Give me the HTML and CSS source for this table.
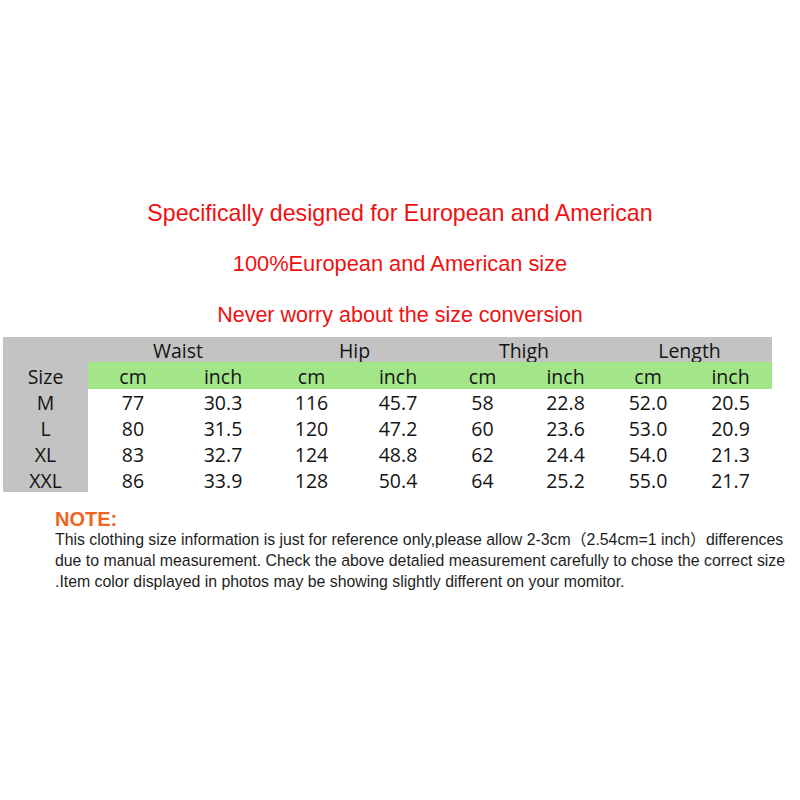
FILE: index.html
```html
<!DOCTYPE html>
<html>
<head>
<meta charset="utf-8">
<link rel="stylesheet" href="styles.css">
</head>
<body>
<div class="page">
  <div class="titles">
    <p class="t t1">Specifically designed for European and American</p>
    <p class="t">100%European and American size</p>
    <p class="t t3">Never worry about the size conversion</p>
  </div>
  <div class="table">
    <div class="c g"></div>
    <div class="c g span2">Waist</div>
    <div class="c g span2">Hip</div>
    <div class="c g span2">Thigh</div>
    <div class="c g span2">Length</div>

    <div class="c g">Size</div>
    <div class="c gr">cm</div><div class="c gr">inch</div>
    <div class="c gr">cm</div><div class="c gr">inch</div>
    <div class="c gr">cm</div><div class="c gr">inch</div>
    <div class="c gr">cm</div><div class="c gr">inch</div>

    <div class="c g">M</div>
    <div class="c w">77</div><div class="c w">30.3</div>
    <div class="c w">116</div><div class="c w">45.7</div>
    <div class="c w">58</div><div class="c w">22.8</div>
    <div class="c w">52.0</div><div class="c w">20.5</div>

    <div class="c g">L</div>
    <div class="c w">80</div><div class="c w">31.5</div>
    <div class="c w">120</div><div class="c w">47.2</div>
    <div class="c w">60</div><div class="c w">23.6</div>
    <div class="c w">53.0</div><div class="c w">20.9</div>

    <div class="c g">XL</div>
    <div class="c w">83</div><div class="c w">32.7</div>
    <div class="c w">124</div><div class="c w">48.8</div>
    <div class="c w">62</div><div class="c w">24.4</div>
    <div class="c w">54.0</div><div class="c w">21.3</div>

    <div class="c g">XXL</div>
    <div class="c w">86</div><div class="c w">33.9</div>
    <div class="c w">128</div><div class="c w">50.4</div>
    <div class="c w">64</div><div class="c w">25.2</div>
    <div class="c w">55.0</div><div class="c w">21.7</div>
  </div>
  <div class="note">
    <div class="note-h">NOTE:</div>
    <p class="note-b">This clothing size information is just for reference only,please allow 2-3cm（2.54cm=1 inch）differences<br>due to manual measurement. Check the above detalied measurement carefully to chose the correct size<br>.Item color displayed in photos may be showing slightly different on your momitor.</p>
  </div>
</div>
</body>
</html>
```
FILE: styles.css
```css
html, body {
  margin: 0;
  padding: 0;
  background: #ffffff;
}
.page {
  width: 800px;
  height: 800px;
}
.titles {
  padding-top: 201px;
  display: flex;
  flex-direction: column;
  align-items: center;
  gap: 27px;
}
.t {
  margin: 0;
  font-family: "Liberation Sans", Arial, sans-serif;
  font-size: 21.8px;
  line-height: 24px;
  color: #ee1111;
}
.t1 {
  font-size: 23.2px;
}
.t3 {
  font-size: 21.5px;
}
.table {
  margin: 10px 0 0 3px;
  width: 769px;
  display: grid;
  grid-template-columns: 85px 90px 90px 87px 86px 83px 83px 82px 83px;
  grid-template-rows: 25px 27px 26px 26px 26px 25px;
  background: #c3c3c3;
  font-family: "Open Sans", sans-serif;
  font-size: 19.5px;
  color: #141414;
}
.c {
  display: flex;
  align-items: center;
  justify-content: center;
  line-height: 1;
  padding-top: 2px;
}
.span2 { grid-column: span 2; }
.gr { background: #a3e68a; }
.w { background: #ffffff; }
.note {
  margin: 17px 0 0 55px;
  font-family: "Liberation Sans", Arial, "Noto Sans CJK SC", sans-serif;
}
.note-h {
  font-weight: bold;
  font-size: 20px;
  line-height: 21px;
  color: #f0641e;
}
.note-b {
  margin: -1px 0 0;
  font-size: 15.85px;
  line-height: 21px;
  color: #1e1e1e;
  white-space: nowrap;
}
```
